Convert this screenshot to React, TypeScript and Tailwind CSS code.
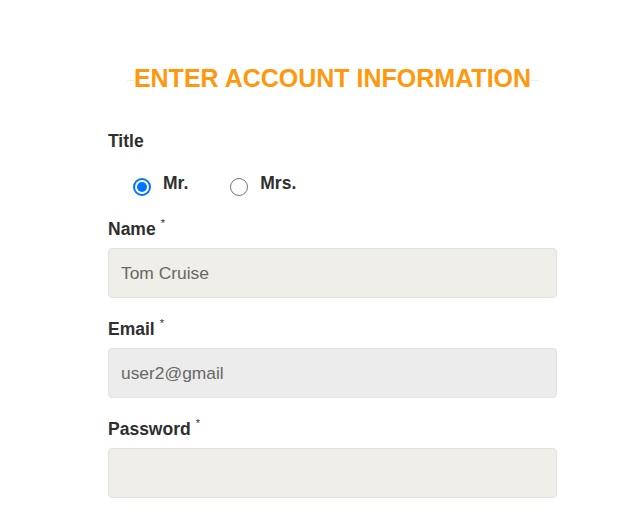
import React from "react";

function Radio({ checked }: { checked: boolean }) {
  return checked ? (
    <span className="mt-[5px] flex h-[18px] w-[18px] shrink-0 items-center justify-center rounded-full border-2 border-[#0075ff] bg-white">
      <span className="h-[10px] w-[10px] rounded-full bg-[#0075ff]" />
    </span>
  ) : (
    <span className="mt-[5px] block h-[18px] w-[18px] shrink-0 rounded-full border border-[#767676] bg-white" />
  );
}

function Label({ text }: { text: string }) {
  return (
    <div className="flex items-start text-[17.5px] font-bold leading-[20px] text-[#2f2f2f]">
      <span>{text}</span>
      <span className="ml-[5px] mt-[-3px] text-[11px] font-normal leading-[14px]">*</span>
    </div>
  );
}

function Field({ value, bg }: { value: string; bg: string }) {
  return (
    <div
      className={`mt-[9px] flex h-[50px] w-[449px] items-center rounded-[4px] border border-[#e3e3dd] pl-[12px] text-[17.4px] text-[#696763] ${bg}`}
    >
      {value}
    </div>
  );
}

export default function App() {
  return (
    <div className="h-[513px] w-[617px] overflow-hidden bg-white font-['Liberation_Sans',Arial,sans-serif]">
      <div className="ml-[108px] w-[449px] pt-[66px]">
        <div className="relative flex h-[24px] items-center justify-center">
          <div className="absolute left-[19px] right-[18px] top-[14px] h-px bg-[#eeeeee]" />
          <span className="relative bg-white text-[25px] font-bold leading-[24px] text-[#fe980f]">
            ENTER ACCOUNT INFORMATION
          </span>
        </div>

        <div className="mt-[41px] text-[17.5px] font-bold leading-[20px] text-[#2f2f2f]">Title</div>

        <div className="mt-[22px] flex items-start pl-[25px] text-[17.5px] font-bold leading-[20px] text-[#2f2f2f]">
          <Radio checked />
          <span className="ml-[12px]">Mr.</span>
          <span className="ml-[42px]">
            <Radio checked={false} />
          </span>
          <span className="ml-[12px]">Mrs.</span>
        </div>

        <div className="mt-[23px]">
          <Label text="Name" />
          <Field value="Tom Cruise" bg="bg-[#efeee8]" />
        </div>

        <div className="mt-[21px]">
          <Label text="Email" />
          <Field value="user2@gmail" bg="bg-[#ececec]" />
        </div>

        <div className="mt-[21px]">
          <Label text="Password" />
          <Field value="" bg="bg-[#efeee8]" />
        </div>
      </div>
    </div>
  );
}
